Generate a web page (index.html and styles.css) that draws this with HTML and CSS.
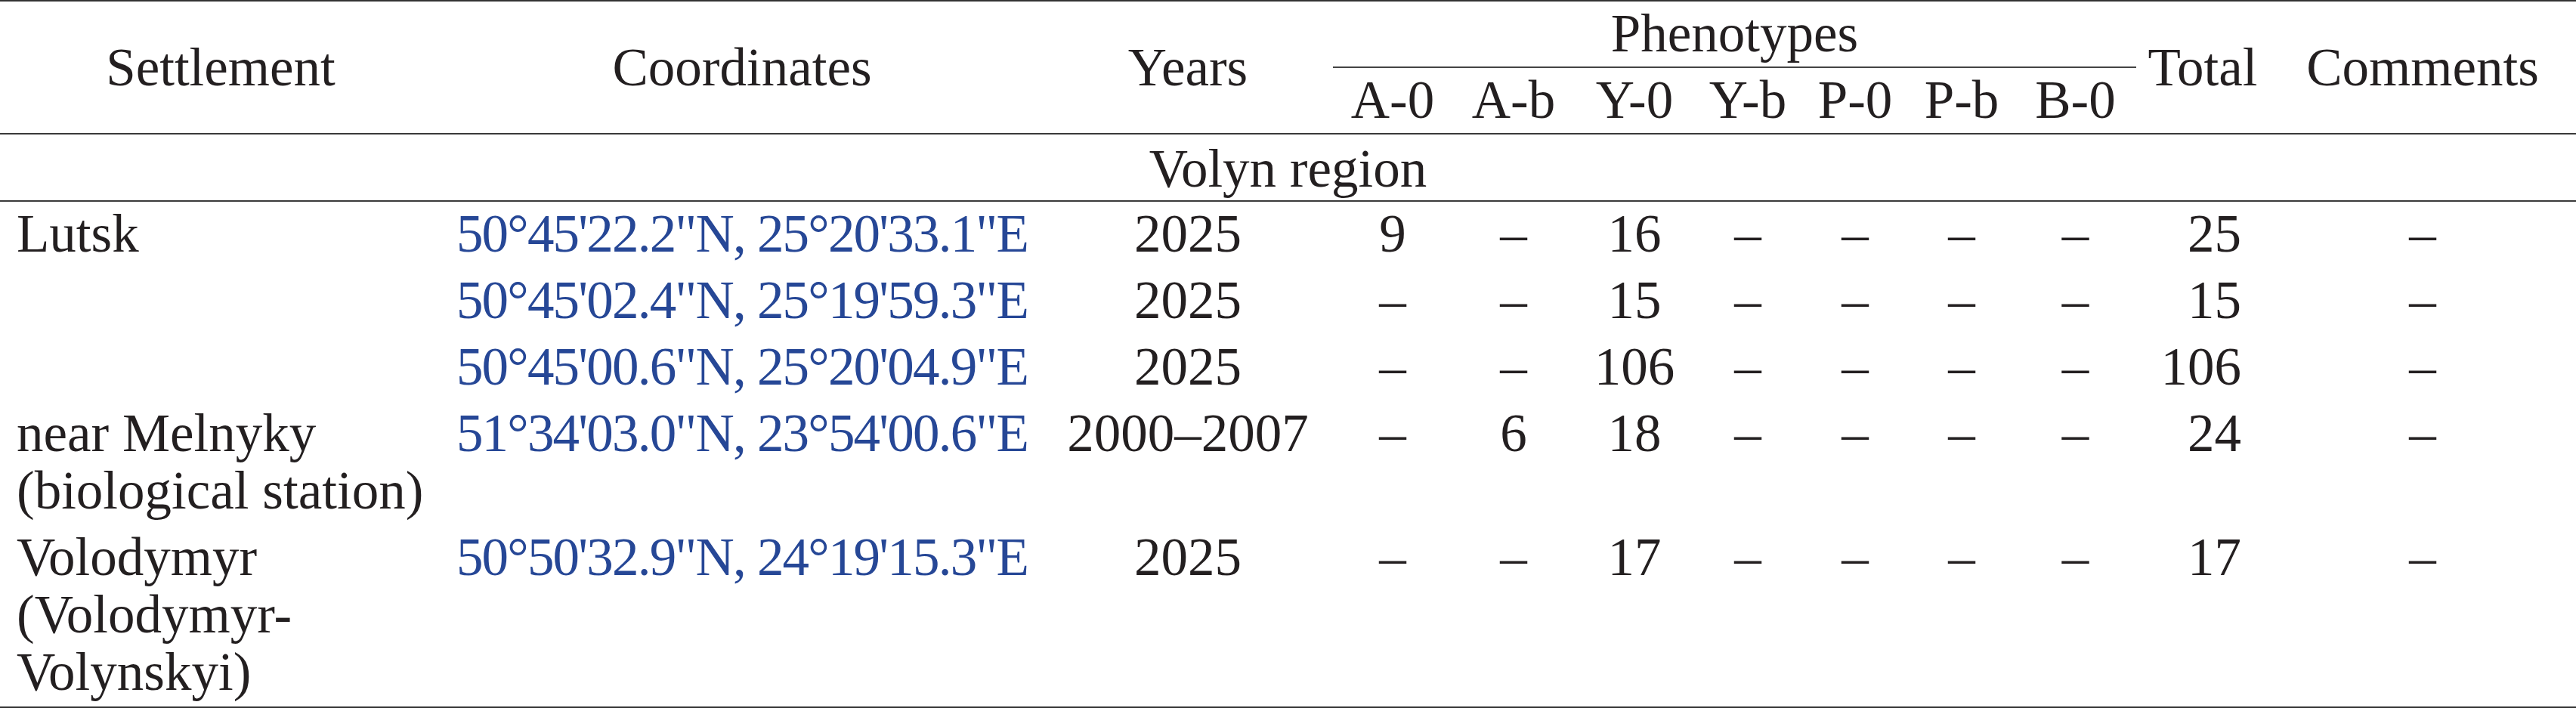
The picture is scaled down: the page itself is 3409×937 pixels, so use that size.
FILE: index.html
```html
<!DOCTYPE html>
<html lang="en">
<head>
<meta charset="utf-8">
<title>Phenotypes by settlement</title>
<link rel="stylesheet" href="styles.css">
</head>
<body>
<table class="data-table">
  <colgroup>
    <col class="c-settlement">
    <col class="c-coords">
    <col class="c-years">
    <col class="c-a0">
    <col class="c-ab">
    <col class="c-y0">
    <col class="c-yb">
    <col class="c-p0">
    <col class="c-pb">
    <col class="c-b0">
    <col class="c-total">
    <col class="c-comments">
  </colgroup>
  <thead>
    <tr>
      <th rowspan="2" class="h-main">Settlement</th>
      <th rowspan="2" class="h-main">Coordinates</th>
      <th rowspan="2" class="h-main">Years</th>
      <th colspan="7" class="h-group">Phenotypes</th>
      <th rowspan="2" class="h-main">Total</th>
      <th rowspan="2" class="h-main">Comments</th>
    </tr>
    <tr>
      <th class="h-sub">A-0</th>
      <th class="h-sub">A-b</th>
      <th class="h-sub">Y-0</th>
      <th class="h-sub">Y-b</th>
      <th class="h-sub">P-0</th>
      <th class="h-sub">P-b</th>
      <th class="h-sub">B-0</th>
    </tr>
  </thead>
  <tbody>
    <tr class="region-row">
      <td colspan="12">Volyn region</td>
    </tr>
    <tr>
      <td class="settlement">Lutsk</td>
      <td class="coords">50°45'22.2"N, 25°20'33.1"E</td>
      <td class="num">2025</td>
      <td class="num">9</td>
      <td class="num">–</td>
      <td class="num">16</td>
      <td class="num">–</td>
      <td class="num">–</td>
      <td class="num">–</td>
      <td class="num">–</td>
      <td class="total">25</td>
      <td class="num">–</td>
    </tr>
    <tr>
      <td class="settlement"></td>
      <td class="coords">50°45'02.4"N, 25°19'59.3"E</td>
      <td class="num">2025</td>
      <td class="num">–</td>
      <td class="num">–</td>
      <td class="num">15</td>
      <td class="num">–</td>
      <td class="num">–</td>
      <td class="num">–</td>
      <td class="num">–</td>
      <td class="total">15</td>
      <td class="num">–</td>
    </tr>
    <tr>
      <td class="settlement"></td>
      <td class="coords">50°45'00.6"N, 25°20'04.9"E</td>
      <td class="num">2025</td>
      <td class="num">–</td>
      <td class="num">–</td>
      <td class="num">106</td>
      <td class="num">–</td>
      <td class="num">–</td>
      <td class="num">–</td>
      <td class="num">–</td>
      <td class="total">106</td>
      <td class="num">–</td>
    </tr>
    <tr>
      <td class="settlement">near Melnyky (biological station)</td>
      <td class="coords">51°34'03.0"N, 23°54'00.6"E</td>
      <td class="num">2000–2007</td>
      <td class="num">–</td>
      <td class="num">6</td>
      <td class="num">18</td>
      <td class="num">–</td>
      <td class="num">–</td>
      <td class="num">–</td>
      <td class="num">–</td>
      <td class="total">24</td>
      <td class="num">–</td>
    </tr>
    <tr class="last-row">
      <td class="settlement">Volodymyr (Volodymyr-Volynskyi)</td>
      <td class="coords">50°50'32.9"N, 24°19'15.3"E</td>
      <td class="num">2025</td>
      <td class="num">–</td>
      <td class="num">–</td>
      <td class="num">17</td>
      <td class="num">–</td>
      <td class="num">–</td>
      <td class="num">–</td>
      <td class="num">–</td>
      <td class="total">17</td>
      <td class="num">–</td>
    </tr>
  </tbody>
</table>
</body>
</html>
```
FILE: styles.css
```css
html, body {
  margin: 0;
  padding: 0;
  background: #ffffff;
}

.data-table {
  width: 3409px;
  table-layout: fixed;
  border-collapse: separate;
  border-spacing: 0;
  font-family: "Liberation Serif", "Times New Roman", serif;
  font-size: 71px;
  line-height: 76px;
  color: #231f20;
}

.c-settlement { width: 584px; }
.c-coords { width: 796px; }
.c-years { width: 384px; }
.c-a0 { width: 158px; }
.c-ab { width: 162px; }
.c-y0 { width: 158px; }
.c-yb { width: 142px; }
.c-p0 { width: 142px; }
.c-pb { width: 140px; }
.c-b0 { width: 161px; }
.c-total { width: 176px; }
.c-comments { width: 406px; }

.data-table th,
.data-table td {
  padding: 0;
  font-weight: normal;
  text-align: center;
  white-space: nowrap;
}

.data-table thead tr:first-child th {
  border-top: 2px solid #333333;
}

.h-main {
  vertical-align: middle;
  border-bottom: 2px solid #3a3a3a;
}

.h-group {
  padding: 4px 0 6px 0 !important;
  border-bottom: 2px solid #444444;
  vertical-align: top;
}

.h-sub {
  padding: 4px 0 6px 0 !important;
  border-bottom: 2px solid #3a3a3a;
  vertical-align: top;
}

.region-row td {
  padding: 7px 0 4px 0;
  border-bottom: 2px solid #3a3a3a;
}

.data-table tbody tr:not(.region-row) td {
  padding-top: 4px;
  padding-bottom: 8px;
  vertical-align: top;
}

.data-table td.settlement {
  text-align: left;
  white-space: normal;
  padding-left: 22px;
  padding-right: 10px;
}

.coords {
  color: #264796;
  letter-spacing: -1.8px;
}

.data-table td.total {
  text-align: right;
  padding-right: 37px;
}

.last-row td {
  border-bottom: 2px solid #333333;
}
```
